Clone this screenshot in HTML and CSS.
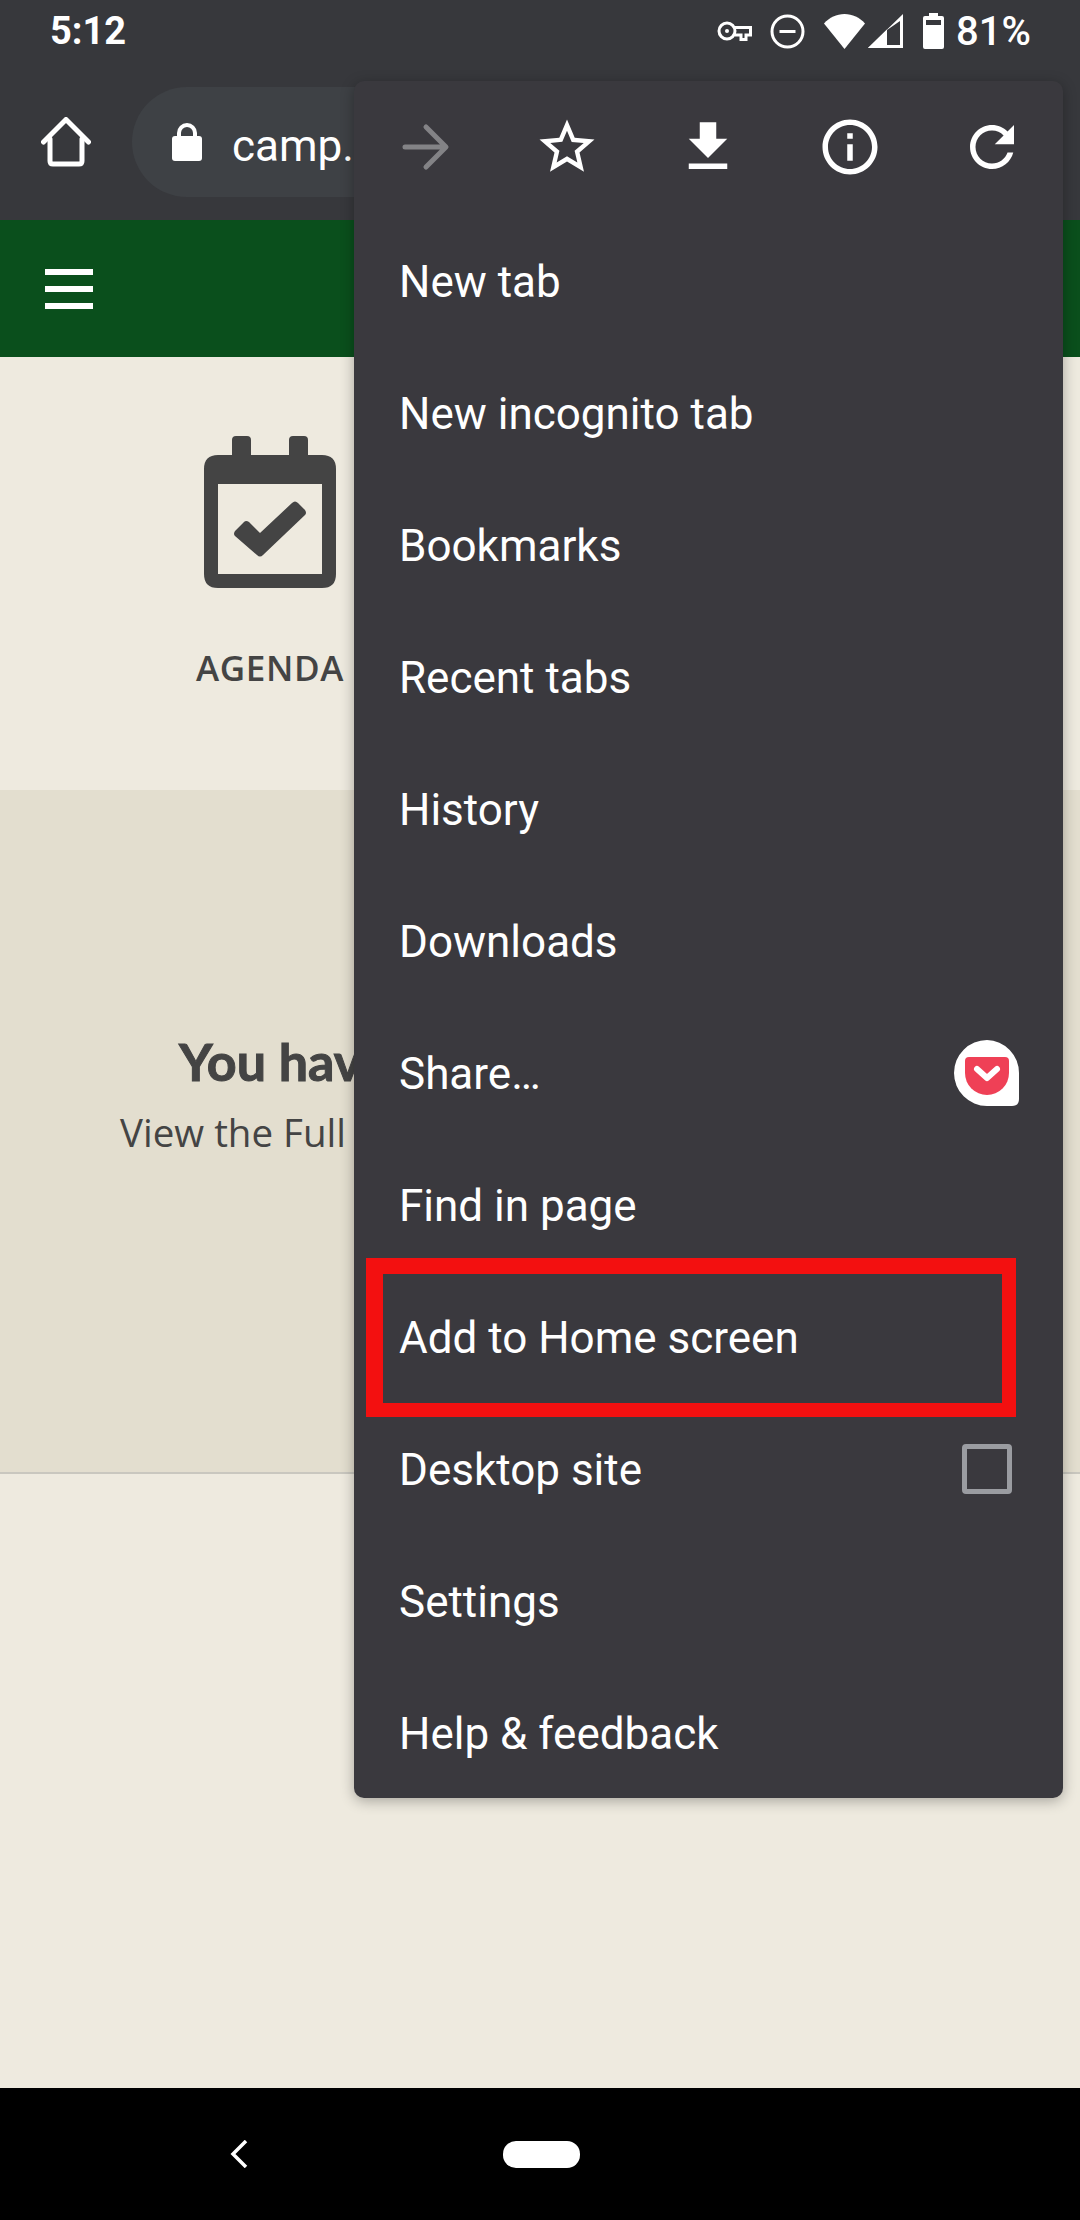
FILE: index.html
```html
<!DOCTYPE html>
<html lang="en">
<head>
    <meta charset="UTF-8">
    <title>Add to Home screen</title>
    <link rel="stylesheet" href="styles.css">
</head>
<body>
    <div class="phone">
        <div class="chrome">
            <div class="statusbar">
                <span class="time">5:12</span>
                <div class="status-icons">
                    <svg class="ic-key" width="35" height="20" viewBox="0 0 35 20" fill="none" stroke="#fff" stroke-width="3">
                        <circle cx="10" cy="10" r="8"/>
                        <circle cx="10" cy="10" r="2" fill="#fff" stroke="none"/>
                        <path d="M18 6.5H33.5V14H29V18.5H24V14H18"/>
                    </svg>
                    <svg class="ic-dnd" width="35" height="35" viewBox="0 0 35 35" fill="none" stroke="#fff" stroke-width="3">
                        <circle cx="17.5" cy="17.5" r="15.5"/>
                        <path d="M9.5 17.5H25.5"/>
                    </svg>
                    <svg class="ic-wifi" width="41" height="35" viewBox="0 0 41 35" fill="#fff">
                        <path d="M0 9.5C5.5 3.5 12.5 0 20.5 0S35.500 3.500 41 9.500L20.500 35z"/>
                    </svg>
                    <svg class="ic-signal" width="35" height="34" viewBox="0 0 35 34" fill="#fff">
                        <path d="M0 34L35 0V34zM19 16V31H32V7z" fill-rule="evenodd"/>
                        <path d="M0 34L19 15.500V34z"/>
                    </svg>
                    <svg class="ic-battery" width="21" height="36" viewBox="0 0 21 36" fill="#fff">
                        <path d="M6 0H15V3H19Q21 3 21 5V34Q21 36 19 36H2Q0 36 0 34V5Q0 3 2 3H6zM3 7V12H18V7z" fill-rule="evenodd"/>
                    </svg>
                    <span class="battery-text">81%</span>
                </div>
            </div>
            <div class="toolbar">
                <svg width="50" height="50" viewBox="0 0 50 50" fill="none" stroke="#fff" stroke-width="5" stroke-linecap="round" stroke-linejoin="round">
                    <path d="M2.500 25L25 2.500L47.500 25"/>
                    <path d="M9 22V44Q9 47 12 47H38Q41 47 41 44V22"/>
                </svg>
                <div class="urlbar">
                    <svg width="30" height="38" viewBox="0 0 30 38" fill="none">
                        <path d="M7 15V10A8 8 0 0 1 23 10V15" stroke="#fff" stroke-width="4"/>
                        <rect y="13" width="30" height="25" rx="3" fill="#fff"/>
                    </svg>
                    <span class="url-text">camp.</span>
                </div>
            </div>
        </div>

        <div class="sitebar">
            <div class="hamburger"><i></i><i></i><i></i></div>
        </div>

        <div class="tiles">
            <div class="tile">
                <svg width="132" height="152" viewBox="0 0 132 152" fill="#444">
                    <path fill-rule="evenodd" d="M32 0Q28 0 28 4V19H14Q0 19 0 33V138Q0 152 14 152H118Q132 152 132 138V33Q132 19 118 19H104V4Q104 0 100 0H89Q85 0 85 4V19H47V4Q47 0 43 0zM14 48H118V138H14z"/>
                    <path d="M31 95L40 86Q42 84 45 86L56 97L88 67Q91 64 94 67L101 74Q103 77 101 79L59 119Q56 122 53 119L31 100Q29 98 31 95z"/>
                </svg>
                <span class="tile-label">AGENDA</span>
            </div>
            <div class="tile"></div>
        </div>

        <div class="notice">
            <div class="notice-title">You have</div>
            <div class="notice-sub">View the Full</div>
        </div>

        <div class="page-rest"></div>

        <div class="navbar">
            <svg width="18" height="28" viewBox="0 0 18 28" fill="none" stroke="#fff" stroke-width="3.500">
                <path d="M16 1L3 14L16 27"/>
            </svg>
            <div class="nav-home"></div>
        </div>

        <div class="menu">
            <div class="menu-icons">
                <svg width="66" height="66" viewBox="0 0 66 66" fill="none" stroke="#838386" stroke-width="5" stroke-linecap="round" stroke-linejoin="round">
                    <path d="M13 33H53M34 13L54 33L34 53"/>
                </svg>
                <svg width="66" height="66" viewBox="0 0 24 24" fill="#fff">
                    <path d="M22 9.24l-7.19-.62L12 2 9.190 8.630 2 9.240l5.460 4.730L5.820 21 12 17.270 18.180 21l-1.630-7.030L22 9.240zM12 15.400l-3.760 2.270 1-4.280-3.320-2.880 4.380-.38L12 6.100l1.710 4.040 4.380.38-3.320 2.880 1 4.280L12 15.400z"/>
                </svg>
                <svg width="66" height="66" viewBox="0 0 24 24" fill="#fff">
                    <path d="M19 9h-4V3H9v6H5l7 7 7-7zM5 18v2h14v-2H5z"/>
                </svg>
                <svg width="66" height="66" viewBox="0 0 24 24" fill="#fff">
                    <path d="M11 7h2v2h-2zm0 4h2v6h-2zm1-9C6.480 2 2 6.480 2 12s4.480 10 10 10 10-4.480 10-10S17.520 2 12 2zm0 18c-4.410 0-8-3.590-8-8s3.590-8 8-8 8 3.590 8 8-3.590 8-8 8z"/>
                </svg>
                <svg width="66" height="66" viewBox="0 0 24 24" fill="#fff">
                    <path d="M17.650 6.350C16.200 4.900 14.210 4 12 4c-4.420 0-7.990 3.580-7.990 8s3.570 8 7.990 8c3.730 0 6.840-2.550 7.730-6h-2.080c-.82 2.330-3.040 4-5.650 4-3.310 0-6-2.690-6-6s2.690-6 6-6c1.660 0 3.140.69 4.220 1.780L13 11h7V4l-2.350 2.350z"/>
                </svg>
            </div>
            <div class="menu-item">New tab</div>
            <div class="menu-item">New incognito tab</div>
            <div class="menu-item">Bookmarks</div>
            <div class="menu-item">Recent tabs</div>
            <div class="menu-item">History</div>
            <div class="menu-item">Downloads</div>
            <div class="menu-item">
                Share…
                <svg class="pocket" width="65" height="66" viewBox="0 0 65 66">
                    <path d="M33 0A33 33 0 0 1 65 33V59Q65 66 58 66H33A33 33 0 0 1 33 0z" fill="#fff"/>
                    <path d="M15 17H51Q55 17 55 21V33A22 22 0 0 1 11 33V21Q11 17 15 17z" fill="#ef4056"/>
                    <path d="M23 29L33 38L43 29" fill="none" stroke="#fff" stroke-width="6" stroke-linecap="round" stroke-linejoin="round"/>
                </svg>
            </div>
            <div class="menu-item">Find in page</div>
            <div class="menu-item">Add to Home screen</div>
            <div class="menu-item">
                Desktop site
                <div class="checkbox"></div>
            </div>
            <div class="menu-item">Settings</div>
            <div class="menu-item">Help &amp; feedback</div>
        </div>

        <div class="highlight"></div>
    </div>
</body>
</html>
```

FILE: styles.css
```css
* {
    box-sizing: border-box;
}
body {
    margin: 0;
    background-color: #eeeadf;
    font-family: Roboto, sans-serif;
}
.phone {
    position: relative;
    width: 1080px;
    height: 2220px;
    display: flex;
    flex-direction: column;
    overflow: hidden;
}

/* android + chrome top */
.chrome {
    height: 220px;
    background-color: #37383c;
    color: #fff;
}
.statusbar {
    height: 62px;
    padding: 0 49px 0 50px;
    display: flex;
    justify-content: space-between;
    align-items: center;
}
.time {
    font-size: 38px;
    font-weight: 700;
}
.status-icons {
    display: flex;
    align-items: center;
}
.ic-dnd {
    margin-left: 18px;
}
.ic-wifi {
    margin-left: 19px;
}
.ic-signal {
    margin-left: 3px;
}
.ic-battery {
    margin-left: 20px;
}
.battery-text {
    margin-left: 12px;
    font-size: 40px;
    font-weight: 500;
}
.toolbar {
    height: 158px;
    padding: 2px 0 0 41px;
    display: flex;
    align-items: center;
}
.urlbar {
    flex: 1;
    height: 110px;
    margin: 0 60px 0 41px;
    padding-left: 40px;
    display: flex;
    align-items: center;
    gap: 30px;
    background-color: #3e4145;
    border-radius: 55px;
}
.url-text {
    font-size: 44px;
    margin-top: 8px;
}

/* site */
.sitebar {
    height: 137px;
    padding-left: 45px;
    display: flex;
    align-items: center;
    background-color: #0a4f1c;
}
.hamburger {
    display: flex;
    flex-direction: column;
    gap: 11px;
}
.hamburger i {
    display: block;
    width: 48px;
    height: 6px;
    background-color: #fff;
}
.tiles {
    height: 433px;
    display: grid;
    grid-template-columns: 1fr 1fr;
}
.tile {
    padding-top: 79px;
    display: flex;
    flex-direction: column;
    align-items: center;
}
.tile-label {
    margin-top: 56px;
    font-family: "Open Sans", sans-serif;
    font-size: 35px;
    font-weight: 600;
    letter-spacing: 0.6px;
    color: #444;
}
.notice {
    height: 684px;
    padding: 240px 0 0 120px;
    background-color: #e3decf;
    border-bottom: 2px solid #c9c7bf;
    color: #444;
}
.notice-title {
    margin-left: 59px;
    font-family: Lato, sans-serif;
    font-size: 52px;
    font-weight: 700;
    -webkit-text-stroke: 1px #444;
}
.notice-sub {
    margin-top: 14px;
    font-family: "Open Sans", sans-serif;
    font-size: 38.500px;
}
.page-rest {
    flex: 1;
}
.navbar {
    height: 132px;
    padding-left: 230px;
    display: flex;
    align-items: center;
    gap: 255px;
    background-color: #000;
}
.nav-home {
    width: 77px;
    height: 27px;
    background-color: #fff;
    border-radius: 13px;
}

/* overflow menu, sits over the page */
.menu {
    position: absolute;
    top: 81px;
    left: 354px;
    width: 709px;
    height: 1717px;
    background-color: #3a393e;
    border-radius: 10px;
    box-shadow: 0 3px 14px rgba(0, 0, 0, 0.3);
    color: #fff;
}
.menu-icons {
    height: 135px;
    padding-bottom: 3px;
    display: grid;
    grid-template-columns: repeat(5, 1fr);
    justify-items: center;
    align-items: center;
}
.menu-item {
    height: 132px;
    padding: 0 44px 0 45px;
    display: flex;
    justify-content: space-between;
    align-items: center;
    font-size: 44px;
}
.pocket {
    margin-bottom: 2px;
}
.checkbox {
    width: 50px;
    height: 50px;
    margin: 0 7px 2px 0;
    border: 5px solid #9a9ca1;
    border-radius: 4px;
}
.highlight {
    position: absolute;
    top: 1258px;
    left: 366px;
    width: 650px;
    height: 159px;
    border: solid #f31010;
    border-width: 16px 14px 14px 17px;
}
```
